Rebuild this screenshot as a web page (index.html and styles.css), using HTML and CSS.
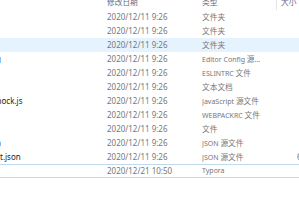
FILE: index.html
```html
<!DOCTYPE html>
<html lang="zh-CN">
<head>
<meta charset="utf-8">
<link rel="stylesheet" href="styles.css">
</head>
<body>
<div class="list">
  <div class="head">
    <div class="c name"></div>
    <div class="c date">修改日期</div>
    <div class="c type sep">类型</div>
    <div class="c size">大小</div>
  </div>
  <div class="row"><div class="c name"></div><div class="c date">2020/12/11 9:26</div><div class="c type"><span class="cj">文件夹</span></div><div class="c size"></div></div>
  <div class="row"><div class="c name"></div><div class="c date">2020/12/11 9:26</div><div class="c type"><span class="cj">文件夹</span></div><div class="c size"></div></div>
  <div class="row hover"><div class="c name"></div><div class="c date">2020/12/11 9:26</div><div class="c type"><span class="cj">文件夹</span></div><div class="c size"></div></div>
  <div class="row"><div class="c name"><span class="frag">g</span></div><div class="c date">2020/12/11 9:26</div><div class="c type">Editor Config <span class="cj">源</span>...</div><div class="c size"></div></div>
  <div class="row"><div class="c name"></div><div class="c date">2020/12/11 9:26</div><div class="c type">ESLINTRC <span class="cj">文件</span></div><div class="c size"></div></div>
  <div class="row"><div class="c name"></div><div class="c date">2020/12/11 9:26</div><div class="c type"><span class="cj">文本文档</span></div><div class="c size"></div></div>
  <div class="row"><div class="c name"><span class="clip">mock.js</span></div><div class="c date">2020/12/11 9:26</div><div class="c type">JavaScript <span class="cj">源文件</span></div><div class="c size"></div></div>
  <div class="row"><div class="c name"></div><div class="c date">2020/12/11 9:26</div><div class="c type">WEBPACKRC <span class="cj">文件</span></div><div class="c size"></div></div>
  <div class="row"><div class="c name"></div><div class="c date">2020/12/11 9:26</div><div class="c type"><span class="cj">文件</span></div><div class="c size"></div></div>
  <div class="row"><div class="c name"><span class="frag">n</span></div><div class="c date">2020/12/11 9:26</div><div class="c type">JSON <span class="cj">源文件</span></div><div class="c size"></div></div>
  <div class="row"><div class="c name">t.json</div><div class="c date">2020/12/11 9:26</div><div class="c type">JSON <span class="cj">源文件</span></div><div class="c size"><span class="num">66 KB</span></div></div>
  <div class="row focus"><div class="c name"></div><div class="c date">2020/12/21 10:50</div><div class="c type">Typora</div><div class="c size"></div></div>
</div>
</body>
</html>
```
FILE: styles.css
```css
html, body {
  margin: 0;
  padding: 0;
  background: #ffffff;
  overflow: hidden;
  width: 299px;
  height: 200px;
}
body {
  font-family: "Noto Sans", "Noto Sans CJK SC", sans-serif;
  font-size: 8px;
  color: #777777;
}
.list {
  display: flex;
  flex-direction: column;
  width: 340px;
}
.head {
  display: flex;
  height: 10px;
  overflow: hidden;
  color: #5a6b85;
}
.head .c {
  margin-top: -5px;
  line-height: 14px;
  height: 15px;
  font-size: 7.7px;
}
.head .sep {
  border-right: 1px solid #e5e5e5;
}
.row {
  display: flex;
  height: 14px;
  line-height: 14px;
  box-sizing: border-box;
  white-space: nowrap;
}
.c {
  flex: none;
  overflow: hidden;
  white-space: nowrap;
  box-sizing: border-box;
}
.name {
  width: 107px;
  color: #262626;
}
.clip {
  display: inline-block;
  margin-left: -6px;
}
.date {
  width: 95px;
}
.type {
  width: 75px;
  font-size: 7px;
}
.cj {
  font-size: 7.7px;
}
.size {
  flex: 1;
  padding-left: 4px;
}
.num {
  margin-left: 16px;
}
.frag {
  display: inline-block;
  margin-left: -4px;
}
.hover {
  background: #e5f3ff;
}
.focus {
  border-top: 1px solid #bfd9ef;
  border-bottom: 1px solid #bfd9ef;
  line-height: 12px;
}
```
